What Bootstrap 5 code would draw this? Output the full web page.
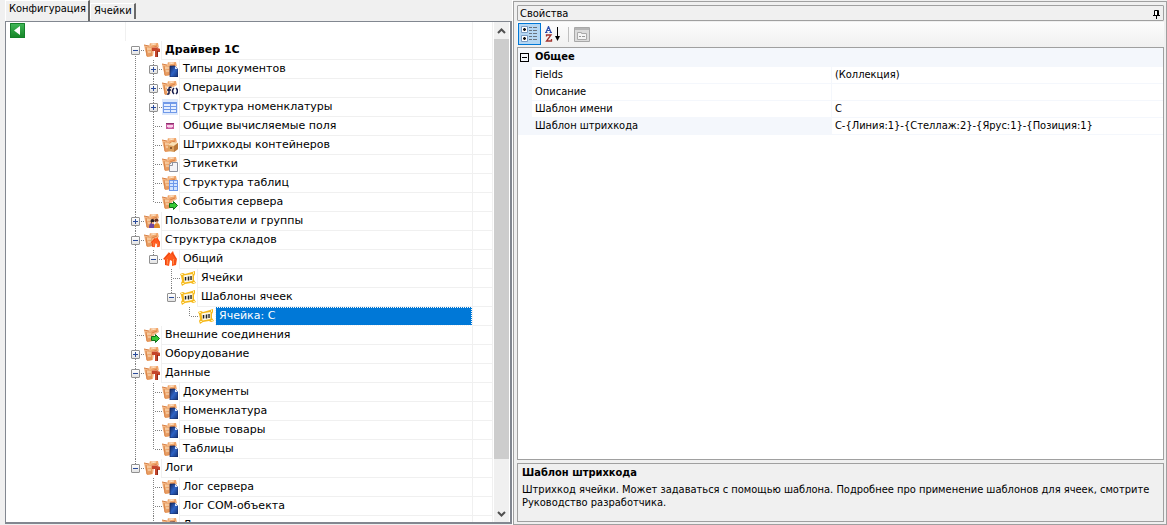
<!DOCTYPE html>
<html lang="ru">
<head>
<meta charset="utf-8">
<meta name="viewport" content="width=device-width, initial-scale=1">
<title>Конфигурация</title>
<link href="https://cdn.jsdelivr.net/npm/bootstrap@5.3.0/dist/css/bootstrap.min.css" rel="stylesheet">
<style>
:root{--face:#f0f0f0;--edge:#a0a0a0;--rule:#f0f0f0;--tint:#f4f7fc}
body{background:var(--face);color:#000;font:11px/16px "DejaVu Sans Condensed","Liberation Sans",sans-serif}
button{font:inherit}
/* left: configuration tree */
.config{flex:0 0 513px;min-width:0;padding-left:5px;padding-bottom:1px;border-right:1px solid #fff}
.config-tabs{height:22px}
.config-tabs .nav-link{margin-top:3px;padding:0 2px 1px 3px;color:#000;font-size:11px;line-height:14px;border:0;border-left:1px solid #fff;border-top:1px solid #fff;border-right:2px solid #696969;border-radius:0;background:var(--face)}
.config-tabs .nav-link.active{margin-top:0;padding-bottom:4px;line-height:16px}
.pane{background:#fff;border:1px solid #828790;border-right-width:2px;border-bottom-width:2px}
.tree{font-family:"DejaVu Sans",sans-serif;line-height:18px}
.tree-head{height:19px}
.back{width:15px;height:15px;margin:1px 0 0 4px}
.head-first{width:120px;border-right:1px solid var(--rule)}
.tree ul{padding-left:121px}
.tree li{height:19px}
.gut{flex:0 0 18px;background-repeat:no-repeat}
.gut-v,.gut-t,.gut-l,.gut-f{--v:repeating-linear-gradient(180deg,#808080 0 1px,#fff 1px 2px);--h:repeating-linear-gradient(90deg,#808080 0 1px,#fff 1px 2px)}
.gut-v{background-image:var(--v);background-size:1px 100%;background-position:8px 0}
.gut-t{background-image:var(--v),var(--h);background-size:1px 100%,9px 1px;background-position:8px 0,8px 9px}
.gut-l{background-image:var(--v),var(--h);background-size:1px 10px,9px 1px;background-position:8px 0,8px 9px}
.gut-f{background-image:var(--v),var(--h);background-size:1px 10px,9px 1px;background-position:8px 9px,8px 9px}
.exp{width:9px;height:9px;margin:5px 0 0 4px;border:1px solid #919191;border-radius:1px;background:linear-gradient(#2b4c9b,#2b4c9b) center/5px 1px no-repeat,linear-gradient(#fff,#e3e3e3)}
.exp.plus{background:linear-gradient(#2b4c9b,#2b4c9b) center/5px 1px no-repeat,linear-gradient(#2b4c9b,#2b4c9b) center/1px 5px no-repeat,linear-gradient(#fff,#e3e3e3)}
.ico{flex:0 0 16px;width:16px;height:16px;margin:1px 1px 0 -1px}
.node{min-width:0;padding-left:3px;border-left:1px solid var(--rule);border-bottom:1px solid var(--rule)}
.picked{background:#0078d7;color:#fff;outline:1px dotted #fff;outline-offset:-1px}
.extra{flex:0 0 21px;border:1px solid var(--rule);border-top:0}
.bar{flex:0 0 15px;margin:0 1px;background:var(--face)}
.bar button{width:15px;height:17px}
.thumb{flex:420 1 0;background:#cdcdcd}
.track{flex:46 1 0}
/* right: property window */
.props{min-width:0;margin-top:1px;padding:3px 2px 2px 3px;border:1px solid var(--edge)}
.caption-bar{height:16px;padding:1px 2px 0;border:1px solid var(--edge);border-radius:1px;line-height:14px}
.tools{height:25px;margin-top:1px;padding:1px;background:linear-gradient(#fdfdfd,#f0f0f0)}
.tools button{width:23px;height:22px}
.tools .on{background:#b5d7f3;border:1px solid #0078d7}
.sep{width:1px;height:15px;margin:4px 5px 0 4px;background:#c0c0c0}
.sheet{border:1px solid var(--edge);background:#fff}
.grid-table{width:100%;table-layout:fixed;border-collapse:separate;border-spacing:0;line-height:16px}
.grid-table td,.grid-table th{height:17px;padding:0 3px;font-weight:400;border-bottom:1px solid var(--tint);white-space:nowrap;overflow:hidden}
.grid-table .gap{width:14px;padding:0;background:var(--tint)}
.grid-table .key{border-right:1px solid var(--tint)}
.grid-table .chosen{background:var(--tint)}
.grid-table .cat th{height:19px;background:var(--tint);font-weight:700}
.col-gap{width:14px}
.col-key{width:46.5%}
.fold{width:9px;height:9px;margin:0 0 0 2px;border:1px solid #000;background:linear-gradient(#000,#000) center/5px 1px no-repeat}
.hint{height:59px;margin-top:3px;padding:1px 4px;border:1px solid var(--edge);line-height:13px}
.hint h2{margin:0 0 2px;font-size:11px;line-height:16px;font-weight:700}
</style>
</head>
<body class="vh-100 d-flex overflow-hidden">
<svg width="0" height="0" class="position-absolute" aria-hidden="true">
<defs>
<linearGradient id="tan" x2="1" y2="1"><stop stop-color="#f6c08c"/><stop offset="1" stop-color="#e08a4c"/></linearGradient>
<linearGradient id="grn" y2="1" x2="0"><stop stop-color="#42b95a"/><stop offset="1" stop-color="#158426"/></linearGradient>
<linearGradient id="blu" x2="1" y2="1"><stop stop-color="#17295f"/><stop offset=".5" stop-color="#2d62c4"/><stop offset="1" stop-color="#14306f"/></linearGradient>
<symbol id="folder" viewBox="0 0 16 16"><path d="M0 3 5 4 6 1 10 2 14 1 15 5 10 8 9 14 3 15 1 8z" fill="#f3b684"/><path d="M6 2 14 1 14 4 8 6z" fill="#f0a468"/><path d="M1 5 8 5 8 14 3 15z" fill="url(#tan)"/><path d="M0 3 5 4M2 5l1 9M8 6l5-2" stroke="#d88248" fill="none"/><path d="M3 7l4 0M4 10l3 0M7 3l5-1" stroke="#fde0c0" fill="none"/></symbol>
<symbol id="hammer" viewBox="0 0 16 16"><use href="#folder"/><path d="M8 5h5l3 2v3h-2v5h-3V9H8z" fill="#c4452b"/><path d="M13.500 9v6" stroke="#8a2a1c"/><path d="M8 5.500h5l2 1.500" stroke="#e58a66" fill="none"/></symbol>
<symbol id="doc" viewBox="0 0 16 16"><use href="#folder"/><path d="M8 5h5l3 3v8H8z" fill="url(#blu)" stroke="#14265c" stroke-width=".7"/><path d="M13 5v3h3z" fill="#d5e3ff"/></symbol>
<symbol id="func" viewBox="0 0 16 16"><use href="#folder"/><path d="M5 7h11v8H5z" fill="#fff" opacity=".7"/><path d="M5 10h4M9.500 7.500Q7 6.500 7 9v4q0 1.500-2 1M12 8q-3 3 0 6M14 8q3 3 0 6" fill="none" stroke="#151b4c" stroke-width="1.500"/></symbol>
<symbol id="table" viewBox="0 0 16 16"><path d="M0 0h16v16H0z" fill="#dce8fc"/><path d="M1 3h14v11H1z" fill="#7099e8"/><path d="M2 5h6v2H2zM9 5h5v2H9zM2 8h6v2H2zM9 8h5v2H9zM2 11h6v2H2zM9 11h5v2H9z" fill="#e4eeff"/></symbol>
<symbol id="field" viewBox="0 0 16 16"><path d="M4 5h8v6H4z" fill="#c65a9e"/><path d="M4 5h8v1H4z" fill="#8d3170"/><path d="M5 7h6v2H5z" fill="#f8d2ea"/><path d="M6 9h4v1H6z" fill="#e89aca"/></symbol>
<symbol id="boxes" viewBox="0 0 16 16"><use href="#folder"/><path d="M6 8l4-3 6 1v6l-4 3-6-1z" fill="#dca05e"/><path d="M6 8l4-3 6 1-4 3z" fill="#fae0b5"/><path d="M12 9l4-3v6l-4 3z" fill="#b97739"/><path d="M8 10h2v2H8z" fill="#8a5a30"/></symbol>
<symbol id="label" viewBox="0 0 16 16"><use href="#folder"/><path d="M7.500 8.500 9.500 6.500h6v9h-8z" fill="#f4f4f8" stroke="#8f929e"/><path d="M10.500 7v2.500H8" fill="none" stroke="#8f929e"/></symbol>
<symbol id="ftable" viewBox="0 0 16 16"><use href="#folder"/><path d="M7 5h9v11H7z" fill="#6e98ea"/><path d="M8 6h3v2H8zM12 6h3v2h-3zM8 9h3v2H8zM12 9h3v2h-3zM8 12h3v3H8zM12 12h3v3h-3z" fill="#d2e4ff"/></symbol>
<symbol id="arrow" viewBox="0 0 16 16"><use href="#folder"/><path d="M7.500 9.500h4v-2l4 4-4 4v-2h-4z" fill="#35c935" stroke="#11701a"/></symbol>
<symbol id="users" viewBox="0 0 16 16"><use href="#folder"/><path d="M5 15q0-5 3-5t3 5z" fill="#70469f"/><path d="M10 15q0-5 3-5t3 5z" fill="#e08a28"/><circle cx="8.500" cy="8" r="2" fill="#2b2026"/><circle cx="12.500" cy="7.500" r="2" fill="#6c3420"/><path d="M8 9h2v2H8zM12 8.500h2v2h-2z" fill="#efb289"/></symbol>
<symbol id="house" viewBox="0 0 16 16"><path d="M1 8 7 1l1 2 3-3 1 3 3 5-1 6-4 1V10L8 9l-1 6-4-1V9z" fill="#ff5b1f"/><path d="M8 2 2 8M10 2l4 6M3.500 9v5M13 9v5" stroke="#ea4410"/><path d="M5 8h1v5H5zM11 8h1v5h-1z" fill="#ff8c49"/></symbol>
<symbol id="fhouse" viewBox="0 0 16 16"><use href="#folder"/><use href="#house" x="6" y="5" width="11" height="11"/></symbol>
<symbol id="cell" viewBox="0 0 16 16"><path d="M0 4 3 3l2 1 7-2 3-1 0 3-1 2 0 4 2 3-3 1-2-1-6 1-3 2-1-3 1-2-1-5z" fill="#f6b91c"/><path d="M3.500 5.500 12.500 4v7l-8 1.500z" fill="#fff9e4"/><path d="M1 4h2v1H1zM13 2h1v2h-1zM2 13h2v1H2zM13 12h2v1h-2z" fill="#fff0a8"/><path d="M5.500 7v3.500M8.500 6.500v4M11 6v4" stroke="#222" stroke-width="1.400"/><path d="M7 7v3M9.800 6v4" stroke="#999" stroke-width=".6"/></symbol>
</defs>
</svg>

<section class="config d-flex flex-column">
  <div class="config-tabs nav d-flex align-items-start" role="tablist">
    <button class="nav-link active" role="tab" aria-selected="true">Конфигурация</button>
    <button class="nav-link" role="tab" aria-selected="false">Ячейки</button>
  </div>
  <div class="pane d-flex flex-grow-1 overflow-hidden">
    <div class="tree d-flex flex-column flex-grow-1 overflow-hidden">
      <div class="tree-head d-flex flex-shrink-0">
        <div class="head-first d-flex"><button class="back border-0 p-0 d-flex" aria-label="Назад"><svg width="15" height="15" viewBox="0 0 15 15"><path d="M0 0h15v15H0z" fill="url(#grn)"/><path d="M.5.500h14v14H.5z" fill="none" stroke="#15802a"/><path d="M10 3v9L4 7.500z" fill="#fff"/></svg></button></div>
        <span class="flex-grow-1"></span><span class="extra border-bottom-0"></span>
      </div>
      <ul class="list-unstyled m-0 flex-grow-1">
        <li class="d-flex"><span class="gut gut-f d-flex"><button class="exp p-0" aria-label="Свернуть"></button></span><svg class="ico"><use href="#hammer"/></svg><span class="node flex-grow-1 fw-bold">Драйвер 1С</span><span class="extra"></span></li>
        <li class="d-flex"><span class="gut gut-v"></span><span class="gut gut-t d-flex"><button class="exp plus p-0" aria-label="Развернуть"></button></span><svg class="ico"><use href="#doc"/></svg><span class="node flex-grow-1">Типы документов</span><span class="extra"></span></li>
        <li class="d-flex"><span class="gut gut-v"></span><span class="gut gut-t d-flex"><button class="exp plus p-0" aria-label="Развернуть"></button></span><svg class="ico"><use href="#func"/></svg><span class="node flex-grow-1">Операции</span><span class="extra"></span></li>
        <li class="d-flex"><span class="gut gut-v"></span><span class="gut gut-t d-flex"><button class="exp plus p-0" aria-label="Развернуть"></button></span><svg class="ico"><use href="#table"/></svg><span class="node flex-grow-1">Структура номенклатуры</span><span class="extra"></span></li>
        <li class="d-flex"><span class="gut gut-v"></span><span class="gut gut-t"></span><svg class="ico"><use href="#field"/></svg><span class="node flex-grow-1">Общие вычисляемые поля</span><span class="extra"></span></li>
        <li class="d-flex"><span class="gut gut-v"></span><span class="gut gut-t"></span><svg class="ico"><use href="#boxes"/></svg><span class="node flex-grow-1">Штрихкоды контейнеров</span><span class="extra"></span></li>
        <li class="d-flex"><span class="gut gut-v"></span><span class="gut gut-t"></span><svg class="ico"><use href="#label"/></svg><span class="node flex-grow-1">Этикетки</span><span class="extra"></span></li>
        <li class="d-flex"><span class="gut gut-v"></span><span class="gut gut-t"></span><svg class="ico"><use href="#ftable"/></svg><span class="node flex-grow-1">Структура таблиц</span><span class="extra"></span></li>
        <li class="d-flex"><span class="gut gut-v"></span><span class="gut gut-l"></span><svg class="ico"><use href="#arrow"/></svg><span class="node flex-grow-1">События сервера</span><span class="extra"></span></li>
        <li class="d-flex"><span class="gut gut-t d-flex"><button class="exp plus p-0" aria-label="Развернуть"></button></span><svg class="ico"><use href="#users"/></svg><span class="node flex-grow-1">Пользователи и группы</span><span class="extra"></span></li>
        <li class="d-flex"><span class="gut gut-t d-flex"><button class="exp p-0" aria-label="Свернуть"></button></span><svg class="ico"><use href="#fhouse"/></svg><span class="node flex-grow-1">Структура складов</span><span class="extra"></span></li>
        <li class="d-flex"><span class="gut gut-v"></span><span class="gut gut-l d-flex"><button class="exp p-0" aria-label="Свернуть"></button></span><svg class="ico"><use href="#house"/></svg><span class="node flex-grow-1">Общий</span><span class="extra"></span></li>
        <li class="d-flex"><span class="gut gut-v"></span><span class="gut"></span><span class="gut gut-t"></span><svg class="ico"><use href="#cell"/></svg><span class="node flex-grow-1">Ячейки</span><span class="extra"></span></li>
        <li class="d-flex"><span class="gut gut-v"></span><span class="gut"></span><span class="gut gut-l d-flex"><button class="exp p-0" aria-label="Свернуть"></button></span><svg class="ico"><use href="#cell"/></svg><span class="node flex-grow-1">Шаблоны ячеек</span><span class="extra"></span></li>
        <li class="d-flex"><span class="gut gut-v"></span><span class="gut"></span><span class="gut"></span><span class="gut gut-l"></span><svg class="ico"><use href="#cell"/></svg><span class="node picked flex-grow-1">Ячейка: С</span><span class="extra"></span></li>
        <li class="d-flex"><span class="gut gut-t"></span><svg class="ico"><use href="#arrow"/></svg><span class="node flex-grow-1">Внешние соединения</span><span class="extra"></span></li>
        <li class="d-flex"><span class="gut gut-t d-flex"><button class="exp plus p-0" aria-label="Развернуть"></button></span><svg class="ico"><use href="#hammer"/></svg><span class="node flex-grow-1">Оборудование</span><span class="extra"></span></li>
        <li class="d-flex"><span class="gut gut-t d-flex"><button class="exp p-0" aria-label="Свернуть"></button></span><svg class="ico"><use href="#hammer"/></svg><span class="node flex-grow-1">Данные</span><span class="extra"></span></li>
        <li class="d-flex"><span class="gut gut-v"></span><span class="gut gut-t"></span><svg class="ico"><use href="#doc"/></svg><span class="node flex-grow-1">Документы</span><span class="extra"></span></li>
        <li class="d-flex"><span class="gut gut-v"></span><span class="gut gut-t"></span><svg class="ico"><use href="#doc"/></svg><span class="node flex-grow-1">Номенклатура</span><span class="extra"></span></li>
        <li class="d-flex"><span class="gut gut-v"></span><span class="gut gut-t"></span><svg class="ico"><use href="#doc"/></svg><span class="node flex-grow-1">Новые товары</span><span class="extra"></span></li>
        <li class="d-flex"><span class="gut gut-v"></span><span class="gut gut-l"></span><svg class="ico"><use href="#doc"/></svg><span class="node flex-grow-1">Таблицы</span><span class="extra"></span></li>
        <li class="d-flex"><span class="gut gut-l d-flex"><button class="exp p-0" aria-label="Свернуть"></button></span><svg class="ico"><use href="#hammer"/></svg><span class="node flex-grow-1">Логи</span><span class="extra"></span></li>
        <li class="d-flex"><span class="gut"></span><span class="gut gut-t"></span><svg class="ico"><use href="#doc"/></svg><span class="node flex-grow-1">Лог сервера</span><span class="extra"></span></li>
        <li class="d-flex"><span class="gut"></span><span class="gut gut-t"></span><svg class="ico"><use href="#doc"/></svg><span class="node flex-grow-1">Лог COM-объекта</span><span class="extra"></span></li>
        <li class="d-flex"><span class="gut"></span><span class="gut gut-t"></span><svg class="ico"><use href="#doc"/></svg><span class="node flex-grow-1">Лог</span><span class="extra"></span></li>
      </ul>
    </div>
    <div class="bar d-flex flex-column">
      <button class="border-0 bg-transparent p-0 d-flex align-items-center justify-content-center" aria-label="Вверх"><svg width="9" height="6" viewBox="0 0 9 6"><path d="M1 5l3.500-3.500L8 5" fill="none" stroke="#505050" stroke-width="2"/></svg></button>
      <div class="thumb"></div><div class="track"></div>
      <button class="border-0 bg-transparent p-0 d-flex align-items-center justify-content-center" aria-label="Вниз"><svg width="9" height="6" viewBox="0 0 9 6"><path d="M1 1l3.500 3.500L8 1" fill="none" stroke="#505050" stroke-width="2"/></svg></button>
    </div>
  </div>
</section>

<section class="props d-flex flex-column flex-grow-1">
  <div class="caption-bar d-flex align-items-center justify-content-between"><span>Свойства</span>
    <button class="border-0 bg-transparent p-0 d-flex" aria-label="Закрепить"><svg width="9" height="10" viewBox="0 0 9 10"><path d="M2 1h5v5H2z" fill="#fff"/><path d="M2.500 6V1.500h4V6M1 6.500h7M4.500 7v3M5.500 1v5" fill="none" stroke="#000"/></svg></button></div>
  <div class="tools d-flex">
    <button class="on p-0 d-flex align-items-center justify-content-center" aria-label="По категориям"><svg width="17" height="16" viewBox="0 0 17 16"><path d="M.5.500h6v6h-6zM.5 9.500h6v6h-6z" fill="#fff" stroke="#7b9cc4"/><path d="M2 3.500h3M3.500 2v3M2 12.500h3M3.500 11v3" stroke="#111" stroke-width="1.400"/><path d="M8 1.500h3m1 0h4M8 4.500h3m1 0h4M8 7.500h3m1 0h4M8 10.500h3m1 0h4M8 13.500h3m1 0h4" stroke="#69737f"/></svg></button>
    <button class="border-0 bg-transparent p-0 d-flex align-items-center justify-content-center" aria-label="По алфавиту"><svg width="16" height="16" viewBox="0 0 16 16"><path d="M1 6.500 3.500.500 6 6.500M2 4.500h3M0 6.500h2.500M4.500 6.500H7" fill="none" stroke="#2f4fae" stroke-width="1.200"/><path d="M1.500 10.500v-1.500h4.500l-4.500 6h5v-2" fill="none" stroke="#a1322e" stroke-width="1.300"/><path d="M12.500 1v11" stroke="#000"/><path d="M10 10h5l-2.500 5z"/></svg></button>
    <span class="sep"></span>
    <button class="border-0 bg-transparent p-0 d-flex align-items-center" aria-label="Страницы свойств" disabled><svg width="16" height="15" viewBox="0 0 16 15"><path d="M.5.500h15v14H.5z" fill="#dcdcdc" stroke="#a8a8a8"/><path d="M1 1h14v2H1z" fill="#b5b5b5"/><path d="M3.500 5.500h4v1h5v6h-9z" fill="#f5f5f5" stroke="#aaa"/><path d="M5 9.500h2m1 0h3" stroke="#999"/></svg></button>
  </div>
  <div class="sheet flex-grow-1 overflow-hidden">
    <table class="grid-table">
      <colgroup><col class="col-gap"><col class="col-key"><col></colgroup>
      <tbody>
      <tr class="cat"><td class="gap"><button class="fold p-0 d-block" aria-label="Свернуть"></button></td><th colspan="2">Общее</th></tr>
      <tr><td class="gap"></td><td class="key">Fields</td><td>(Коллекция)</td></tr>
      <tr><td class="gap"></td><td class="key">Описание</td><td></td></tr>
      <tr><td class="gap"></td><td class="key">Шаблон имени</td><td>С</td></tr>
      <tr><td class="gap"></td><td class="key chosen">Шаблон штрихкода</td><td>С-{Линия:1}-{Стеллаж:2}-{Ярус:1}-{Позиция:1}</td></tr>
      </tbody>
    </table>
  </div>
  <div class="hint overflow-hidden"><h2>Шаблон штрихкода</h2><p class="m-0">Штрихкод ячейки. Может задаваться с помощью шаблона. Подробнее про применение шаблонов для ячеек, смотрите Руководство разработчика.</p></div>
</section>
<script src="https://cdn.jsdelivr.net/npm/bootstrap@5.3.0/dist/js/bootstrap.bundle.min.js"></script>
</body>
</html>
